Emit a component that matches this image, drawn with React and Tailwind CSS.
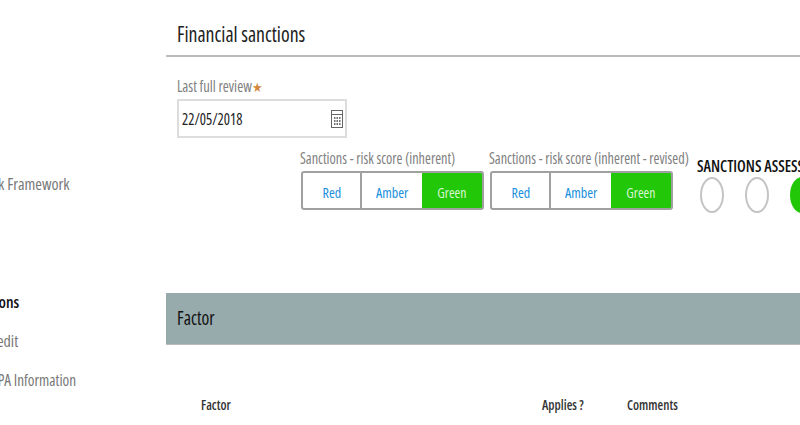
function CalendarIcon() {
    return (
        <svg width="12" height="18" viewBox="0 0 12 18" fill="none" className="shrink-0">
            <rect x="0.5" y="0.5" width="11" height="17" fill="#fff" stroke="#666" />
            <path d="M1 4.5h10" stroke="#666" />
            <path d="M3 8h1.500M5.500 8H7M8 8h1.500M3 11h1.500M5.500 11H7M8 11h1.500M3 14h1.500M5.500 14H7M8 14h1.500" stroke="#444" strokeWidth="1.500" />
        </svg>
    )
}

function ScoreGroup({ label }) {
    return (
        <div className="w-[183px] shrink-0">
            <div className="h-[26px] -ml-[1px] text-[16px] leading-[26px] text-[#808080] whitespace-nowrap origin-left scale-x-[.89]">{label}</div>
            <div className="flex h-[39px] rounded-[3px] border-2 border-[#a0a0a0] overflow-hidden text-[15px]">
                <div className="w-[59px] pt-[3px] flex items-center justify-center border-r-2 border-[#a0a0a0] text-[#1a8fdc]"><span className="scale-x-[.94]">Red</span></div>
                <div className="w-[60px] pt-[3px] flex items-center justify-center text-[#1a8fdc]"><span className="scale-x-[.94]">Amber</span></div>
                <div className="flex-1 pt-[3px] flex items-center justify-center bg-[#22c707] text-[#d8f5d2]"><span className="scale-x-[.92]">Green</span></div>
            </div>
        </div>
    )
}

function Circle({ on }) {
    return <div className={`w-[24px] h-[36px] shrink-0 rounded-[50%] border-2 ${on ? 'border-[#22c707] bg-[#22c707]' : 'border-[#c4c4c4] bg-white'}`}></div>
}

export default function App() {
    return (
        <div className="w-[800px] h-[425px] overflow-hidden bg-white flex font-['Open_Sans',sans-serif] [font-stretch:75%]">
            {/* Sidebar */}
            <aside className="w-[166px] shrink-0 overflow-hidden pt-[172px] text-[16px] leading-[24px] text-[#777] whitespace-nowrap">
                <div className="-ml-[18px]">Risk Framework</div>
                <div className="mt-[94px] -ml-[37px] font-semibold text-[#111]">Sanctions</div>
                <div className="mt-[15px] -ml-[15px]">Credit</div>
                <div className="mt-[15px] -ml-[9px] origin-left scale-x-[.95]">PPA Information</div>
            </aside>

            <main className="w-[800px] shrink-0">
                <div className="h-[57px] border-b-2 border-[#bbb] pl-[11px] pt-[17px] text-[22px] leading-[33px] text-[#222]">
                    <div className="origin-left scale-x-[.9]">Financial sanctions</div>
                </div>

                <div className="pl-[11px] pt-[17px]">
                    <div className="h-[25px] text-[16px] leading-[25px] text-[#808080] origin-left scale-x-[.91]">Last full review<span className="text-[13px] text-[#d2873c]">★</span></div>
                    <div className="w-[170px] h-[39px] border-2 border-[#ddd] flex items-center justify-between pl-[3px] pr-[2px] text-[17px] text-[#222]">
                        <span className="origin-left scale-x-[.86]">22/05/2018</span>
                        <CalendarIcon />
                    </div>
                </div>

                <div className="flex pl-[135px] pt-[7px]">
                    <ScoreGroup label="Sanctions - risk score (inherent)" />
                    <div className="w-[6px] shrink-0"></div>
                    <ScoreGroup label="Sanctions - risk score (inherent - revised)" />
                    <div className="pl-[24px] pt-[11px]">
                        <div className="h-[20px] text-[16px] leading-[20px] font-semibold text-[#111] whitespace-nowrap origin-left scale-x-[.96]">SANCTIONS ASSESSMENT</div>
                        <div className="flex gap-[21px] pl-[3px] pt-[1px]">
                            <Circle />
                            <Circle />
                            <Circle on />
                        </div>
                    </div>
                </div>

                <div className="mt-[80px] h-[52px] bg-[#97abad] border-b border-[#bbb] pl-[11px] flex items-center text-[19px] font-medium text-[#111]">
                    <span className="origin-left scale-x-[.93]">Factor</span>
                </div>

                <div className="flex pt-[50px] text-[14px] leading-[20px] font-semibold text-[#333]">
                    <div className="w-[376px] pl-[35px]"><div className="origin-left scale-x-[.93]">Factor</div></div>
                    <div className="w-[85px]"><div className="origin-left scale-x-[.93]">Applies ?</div></div>
                    <div className="origin-left scale-x-[.93]">Comments</div>
                </div>
            </main>
        </div>
    )
}
